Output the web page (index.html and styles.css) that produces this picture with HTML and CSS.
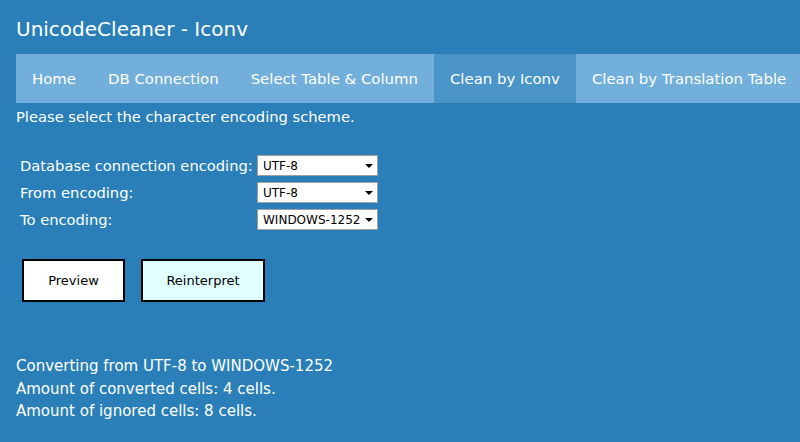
FILE: index.html
```html
<!DOCTYPE html>
<html>
<head>
<meta charset="utf-8">
<link rel="stylesheet" href="styles.css">
</head>
<body>
<header class="header">
  <h1 class="title">UnicodeCleaner - Iconv</h1>
</header>
<nav class="nav">
  <a class="nav-item">Home</a>
  <a class="nav-item">DB Connection</a>
  <a class="nav-item">Select Table &amp; Column</a>
  <a class="nav-item active">Clean by Iconv</a>
  <a class="nav-item">Clean by Translation Table</a>
</nav>
<main class="content">
  <p class="intro">Please select the character encoding scheme.</p>
  <div class="form">
    <label class="label">Database connection encoding:</label>
    <div class="select"><span>UTF-8</span><span class="arrow"></span></div>
    <label class="label">From encoding:</label>
    <div class="select"><span>UTF-8</span><span class="arrow"></span></div>
    <label class="label">To encoding:</label>
    <div class="select"><span>WINDOWS-1252</span><span class="arrow"></span></div>
  </div>
  <div class="buttons">
    <button class="btn">Preview</button>
    <button class="btn btn-cyan">Reinterpret</button>
  </div>
  <div class="results">
    <div>Converting from UTF-8 to WINDOWS-1252</div>
    <div>Amount of converted cells: 4 cells.</div>
    <div>Amount of ignored cells: 8 cells.</div>
  </div>
</main>
</body>
</html>
```
FILE: styles.css
```css
html, body {
  margin: 0;
  padding: 0;
  overflow: hidden;
}
body {
  background: #2a7fb8;
  color: #ffffff;
  font-family: "DejaVu Sans", Verdana, sans-serif;
  font-size: 14.7px;
  padding-left: 16px;
  height: 442px;
}
.header {
  height: 54px;
  display: flex;
  align-items: center;
}
.title {
  margin: 0;
  font-size: 20px;
  font-weight: normal;
  padding-top: 4px;
}
.nav {
  display: flex;
  flex-wrap: nowrap;
  background: #72afda;
  height: 49px;
  width: 900px;
  font-size: 14.9px;
}
.nav-item {
  display: flex;
  align-items: center;
  padding: 0 16px;
  white-space: nowrap;
  color: #ffffff;
}
.nav-item.active {
  background: #4a94c7;
}
.content {
  padding-top: 4px;
}
.intro {
  margin: 0;
  line-height: 20px;
}
.form {
  display: grid;
  grid-template-columns: 237px 121px;
  row-gap: 6px;
  margin-top: 28px;
  margin-left: 4px;
  align-items: center;
}
.label {
  line-height: 20px;
}
.select {
  display: flex;
  align-items: center;
  justify-content: space-between;
  height: 19px;
  background: #ffffff;
  border: 1px solid #a0a0a0;
  color: #000000;
  font-size: 12px;
  padding: 0 4px 0 5px;
}
.arrow {
  width: 0;
  height: 0;
  border-left: 4px solid transparent;
  border-right: 4px solid transparent;
  border-top: 4px solid #000000;
}
.buttons {
  display: flex;
  gap: 16px;
  margin-top: 29px;
  margin-left: 6px;
}
.btn {
  height: 43px;
  border: 2px solid #000000;
  background: #ffffff;
  color: #000000;
  font-family: "DejaVu Sans", Verdana, sans-serif;
  font-size: 13px;
  padding: 0;
  width: 103px;
}
.btn-cyan {
  background: #e0ffff;
  width: 124px;
}
.results {
  margin-top: 53px;
  line-height: 22.5px;
  font-size: 15px;
}
```
